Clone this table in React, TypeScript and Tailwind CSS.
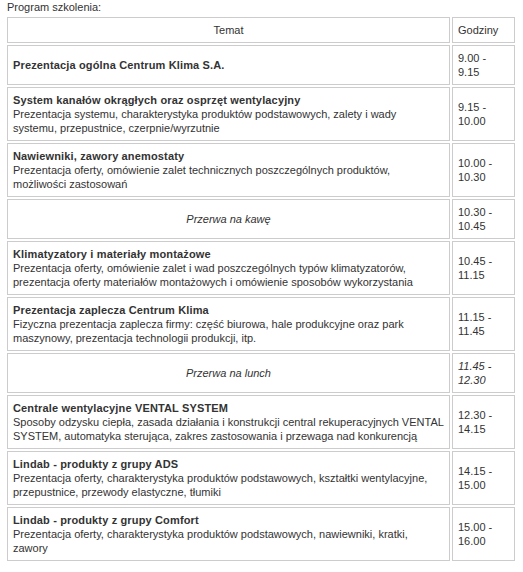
type Row = {
  title?: string;
  desc?: string[];
  pause?: string;
  time: string;
  timeItalic?: boolean;
};

// line breaks follow the original page
const rows: Row[] = [
  { title: "Prezentacja ogólna Centrum Klima S.A.", time: "9.00 - 9.15" },
  {
    title: "System kanałów okrągłych oraz osprzęt wentylacyjny",
    desc: [
      "Prezentacja systemu, charakterystyka produktów podstawowych, zalety i wady",
      "systemu, przepustnice, czerpnie/wyrzutnie",
    ],
    time: "9.15 - 10.00",
  },
  {
    title: "Nawiewniki, zawory anemostaty",
    desc: [
      "Prezentacja oferty, omówienie zalet technicznych poszczególnych produktów,",
      "możliwości zastosowań",
    ],
    time: "10.00 - 10.30",
  },
  { pause: "Przerwa na kawę", time: "10.30 - 10.45" },
  {
    title: "Klimatyzatory i materiały montażowe",
    desc: [
      "Prezentacja oferty, omówienie zalet i wad poszczególnych typów klimatyzatorów,",
      "prezentacja oferty materiałów montażowych i omówienie sposobów wykorzystania",
    ],
    time: "10.45 - 11.15",
  },
  {
    title: "Prezentacja zaplecza Centrum Klima",
    desc: [
      "Fizyczna prezentacja zaplecza firmy: część biurowa, hale produkcyjne oraz park",
      "maszynowy, prezentacja technologii produkcji, itp.",
    ],
    time: "11.15 - 11.45",
  },
  { pause: "Przerwa na lunch", time: "11.45 - 12.30", timeItalic: true },
  {
    title: "Centrale wentylacyjne VENTAL SYSTEM",
    desc: [
      "Sposoby odzysku ciepła, zasada działania i konstrukcji central rekuperacyjnych VENTAL",
      "SYSTEM, automatyka sterująca, zakres zastosowania i przewaga nad konkurencją",
    ],
    time: "12.30 - 14.15",
  },
  {
    title: "Lindab - produkty z grupy ADS",
    desc: [
      "Prezentacja oferty, charakterystyka produktów podstawowych, kształtki wentylacyjne,",
      "przepustnice, przewody elastyczne, tłumiki",
    ],
    time: "14.15 - 15.00",
  },
  {
    title: "Lindab - produkty z grupy Comfort",
    desc: [
      "Prezentacja oferty, charakterystyka produktów podstawowych, nawiewniki, kratki,",
      "zawory",
    ],
    time: "15.00 - 16.00",
  },
];

const cell = "border border-[#cccccc] px-[5px] py-[5px] align-middle";

export default function App() {
  return (
    <div className="min-h-[572px] w-[523px] bg-white pl-[5px] font-['Liberation_Sans',Arial,sans-serif] text-[11px] leading-[14px] text-[#333333]">
      <p className="pl-[2px]">Program szkolenia:</p>
      <table className="mt-px w-[512px] table-fixed border-separate border-spacing-[2px]">
        <colgroup>
          <col className="w-[443px]" />
          <col className="w-[63px]" />
        </colgroup>
        <thead>
          <tr>
            <th className={`${cell} text-center font-normal`}>Temat</th>
            <th className={`${cell} text-left font-normal`}>Godziny</th>
          </tr>
        </thead>
        <tbody>
          {rows.map((r, i) => (
            <tr key={i}>
              {r.pause ? (
                <td className={`${cell} text-center italic`}>{r.pause}</td>
              ) : (
                <td className={cell}>
                  <strong className="font-bold tracking-[0.15px]">{r.title}</strong>
                  {r.desc?.map((line, j) => (
                    <span key={j} className="block whitespace-nowrap">
                      {line}
                    </span>
                  ))}
                </td>
              )}
              <td className={`${cell} ${r.timeItalic ? "italic" : ""}`}>{r.time}</td>
            </tr>
          ))}
        </tbody>
      </table>
    </div>
  );
}
